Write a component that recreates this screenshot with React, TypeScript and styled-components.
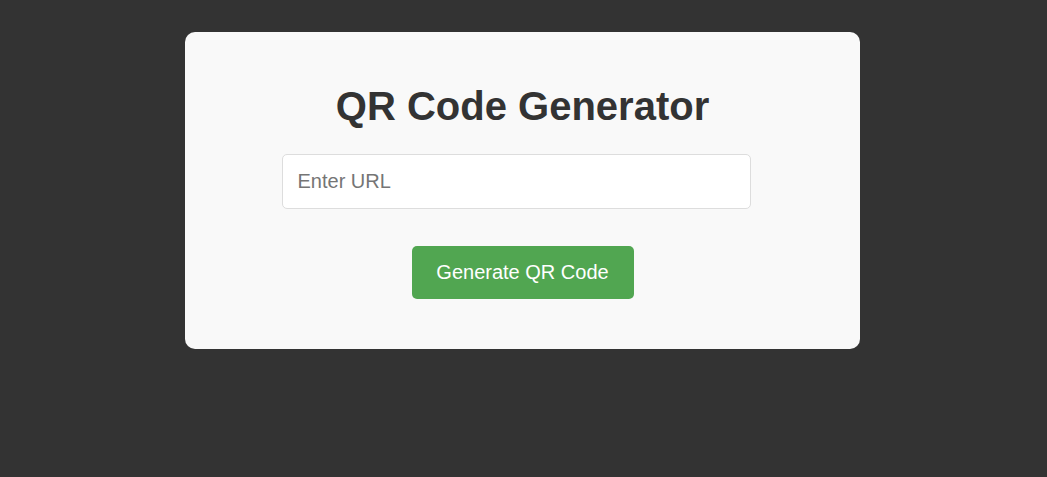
import styled, { createGlobalStyle } from "styled-components";

const GlobalStyle = createGlobalStyle`
  html, body {
    margin: 0;
    padding: 0;
    background: #333333;
    font-family: "Liberation Sans", Arial, sans-serif;
  }
`;

const Page = styled.div`
  min-height: 477px;
  display: flex;
  justify-content: center;
  align-items: flex-start;
  padding: 32px 2px 0 0;
  box-sizing: border-box;
`;

const Card = styled.div`
  width: 675px;
  box-sizing: border-box;
  padding: 51px 20px 50px;
  background: #f9f9f9;
  border-radius: 10px;
  display: flex;
  flex-direction: column;
  align-items: center;
`;

const Title = styled.h1`
  margin: 0 0 25px;
  font-size: 40px;
  font-weight: 700;
  line-height: 46px;
  color: #333333;
`;

const UrlInput = styled.input`
  width: 469px;
  height: 55px;
  box-sizing: border-box;
  margin: 0 13px 37px 0;
  padding: 0 15px;
  font-family: inherit;
  font-size: 20px;
  color: #333;
  background: #ffffff;
  border: 1px solid #dddddd;
  border-radius: 5px;
  outline: none;

  &::placeholder {
    color: #757575;
  }
`;

const GenerateButton = styled.button`
  width: 222px;
  height: 53px;
  padding: 0;
  font-family: inherit;
  font-size: 20px;
  color: #ffffff;
  background: #51a651;
  border: none;
  border-radius: 5px;
  cursor: pointer;
`;

export default function App() {
  return (
    <>
      <GlobalStyle />
      <Page>
        <Card>
          <Title>QR Code Generator</Title>
          <UrlInput type="text" placeholder="Enter URL" />
          <GenerateButton>Generate QR Code</GenerateButton>
        </Card>
      </Page>
    </>
  );
}
